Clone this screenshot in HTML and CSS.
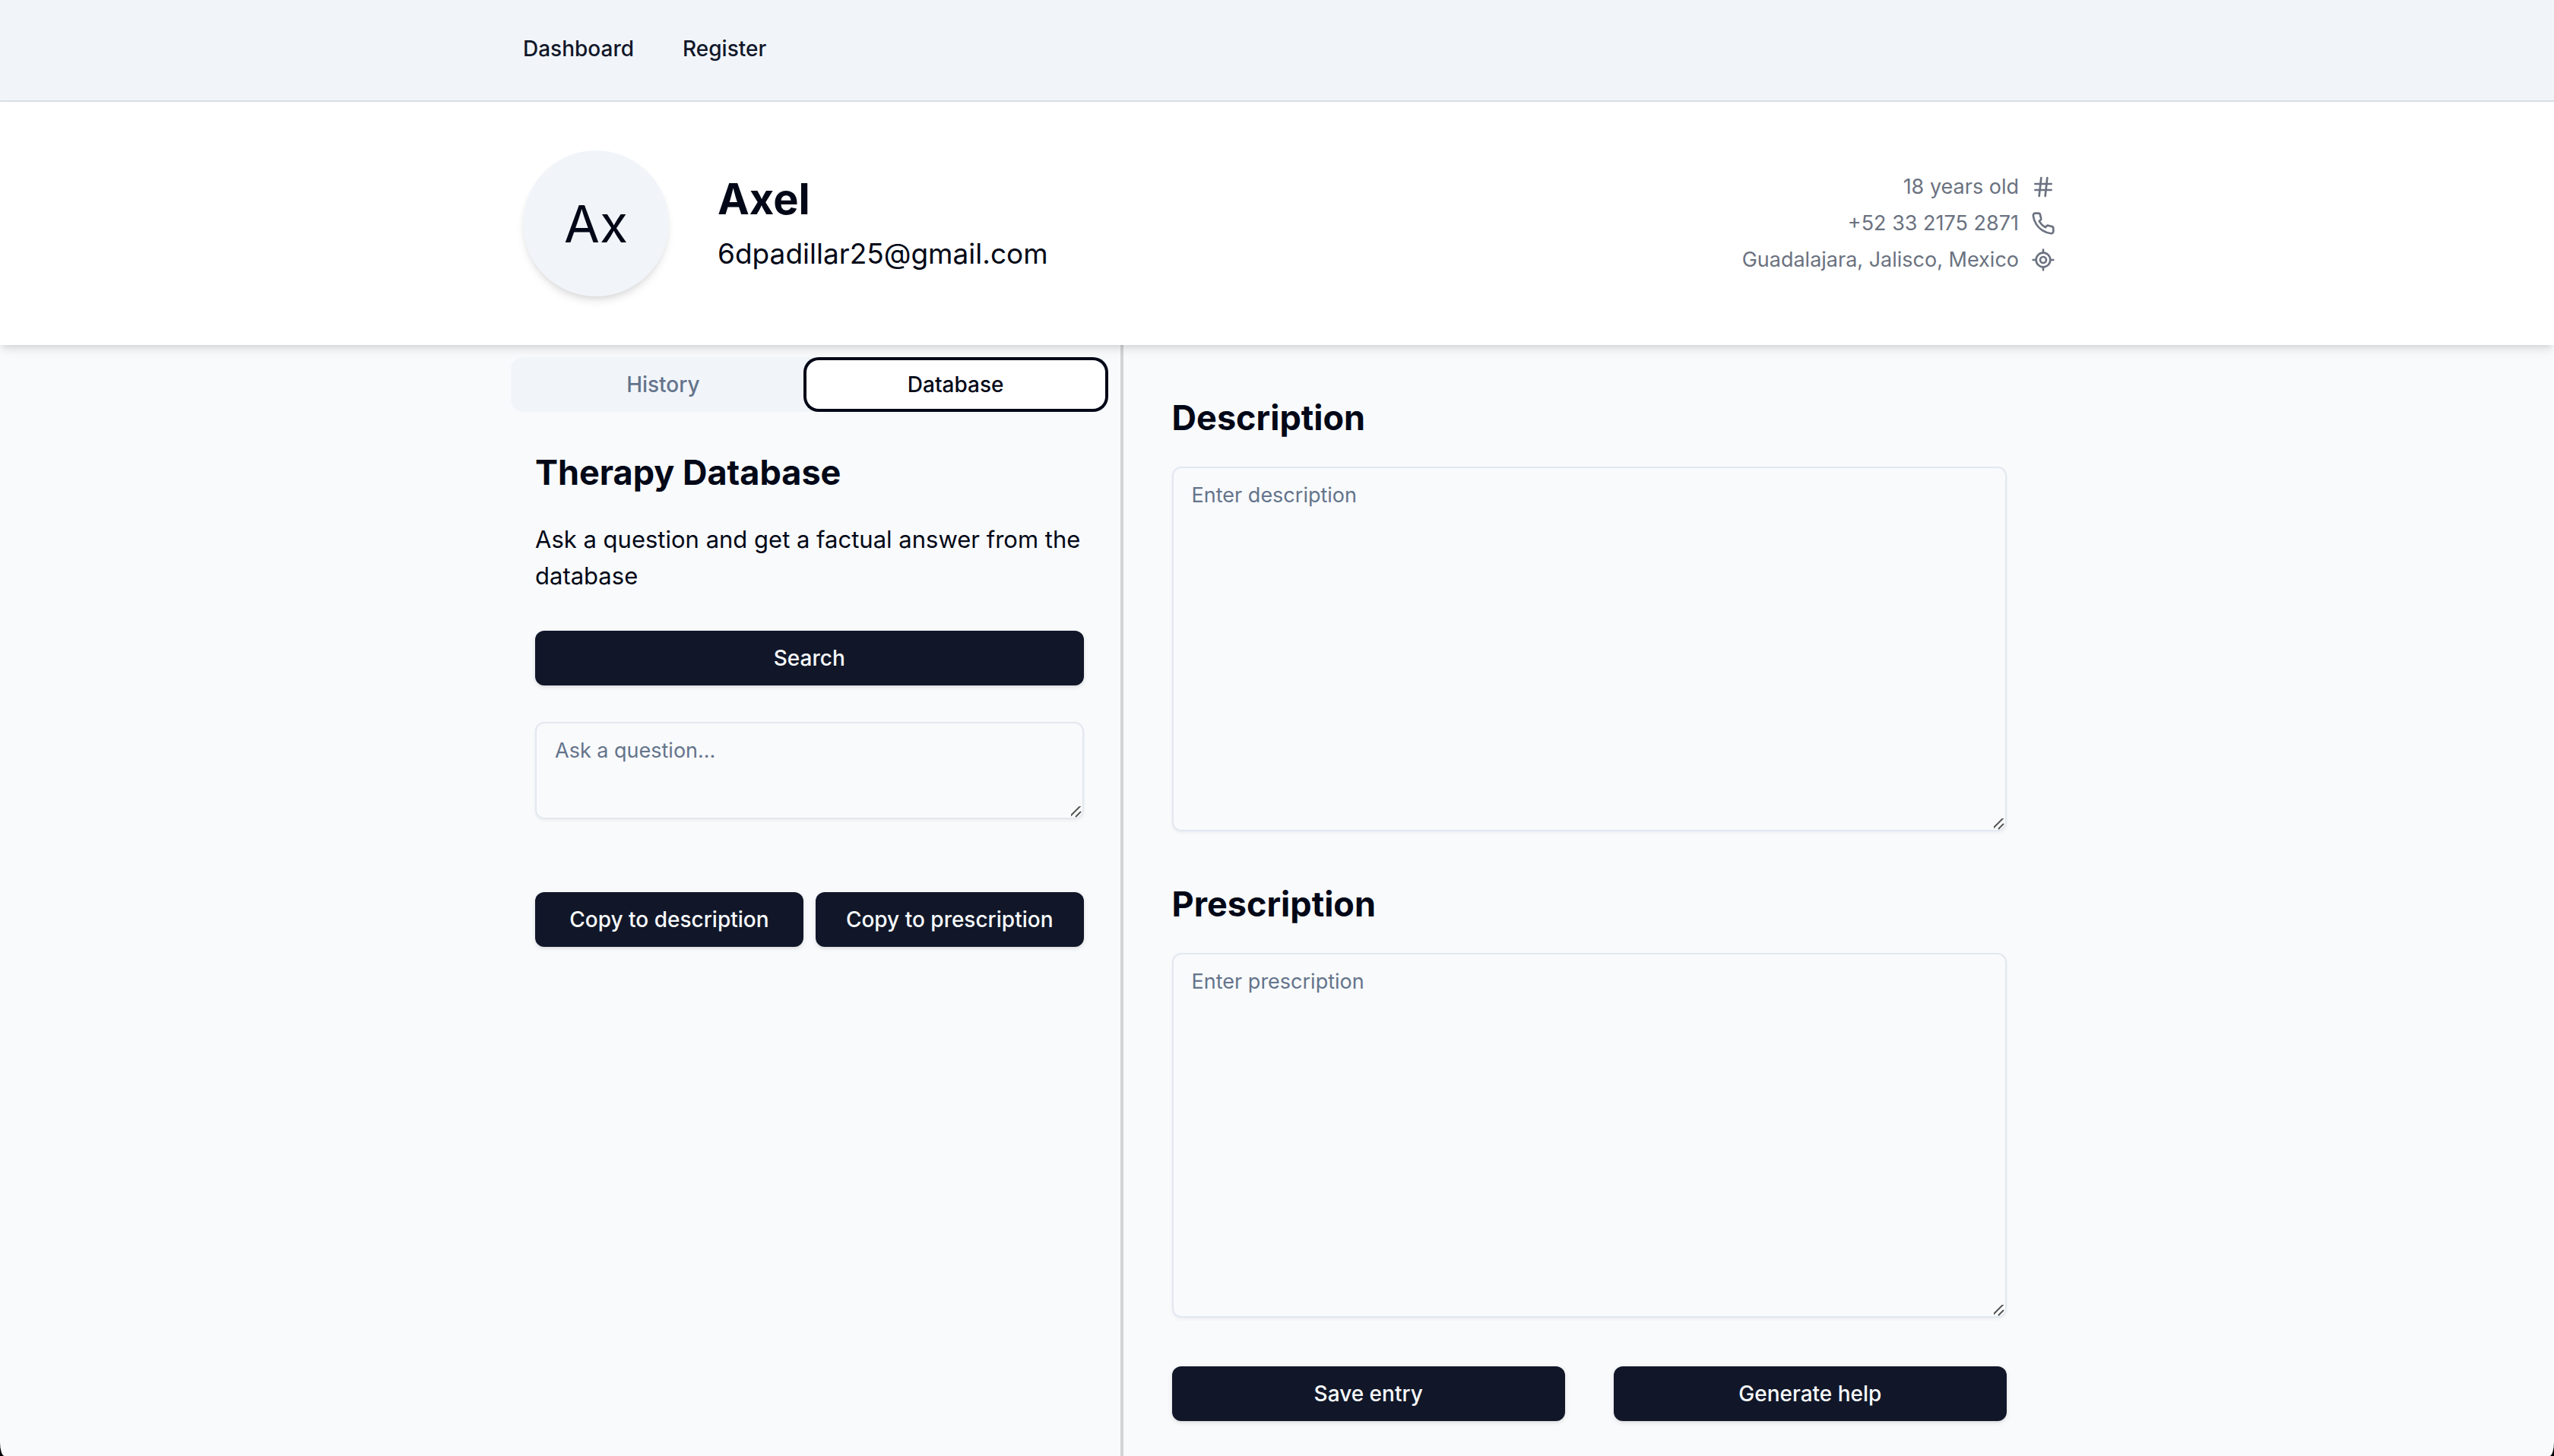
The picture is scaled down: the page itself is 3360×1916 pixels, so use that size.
FILE: index.html
```html
<!DOCTYPE html>
<html lang="en">
<head>
  <meta charset="utf-8">
  <meta name="viewport" content="width=device-width, initial-scale=1">
  <title>Axel</title>
  <link rel="stylesheet" href="styles.css">
</head>
<body>
  <header class="topbar">
    <nav class="container topbar-nav">
      <a class="topbar-link" href="#dashboard">Dashboard</a>
      <a class="topbar-link" href="#register">Register</a>
    </nav>
  </header>

  <section class="profile">
    <div class="container profile-row">
      <div class="avatar">Ax</div>
      <div class="identity">
        <h1 class="name">Axel</h1>
        <p class="email">6dpadillar25@gmail.com</p>
      </div>
      <ul class="facts">
        <li class="fact">
          <span>18 years old</span>
          <svg class="icon" viewBox="0 0 24 24" aria-hidden="true"><path d="M4 9h16M4 15h16M10 3 8 21M16 3l-2 18"/></svg>
        </li>
        <li class="fact">
          <span>+52 33 2175 2871</span>
          <svg class="icon" viewBox="0 0 24 24" aria-hidden="true"><path d="M22 16.92v3a2 2 0 0 1-2.18 2 19.79 19.79 0 0 1-8.63-3.07 19.5 19.5 0 0 1-6-6 19.79 19.79 0 0 1-3.07-8.67A2 2 0 0 1 4.11 2h3a2 2 0 0 1 2 1.72 12.84 12.84 0 0 0 .7 2.81 2 2 0 0 1-.45 2.11L8.09 9.91a16 16 0 0 0 6 6l1.27-1.27a2 2 0 0 1 2.11-.45 12.84 12.84 0 0 0 2.81.7A2 2 0 0 1 22 16.92z"/></svg>
        </li>
        <li class="fact">
          <span>Guadalajara, Jalisco, Mexico</span>
          <svg class="icon" viewBox="0 0 24 24" aria-hidden="true"><path d="M2 12h3M19 12h3M12 2v3M12 19v3"/><circle cx="12" cy="12" r="7"/><circle cx="12" cy="12" r="3"/></svg>
        </li>
      </ul>
    </div>
  </section>

  <main class="container workspace">
    <section class="sidebar">
      <div class="tabs" role="tablist">
        <button class="tab" type="button" role="tab" aria-selected="false">History</button>
        <button class="tab tab-active" type="button" role="tab" aria-selected="true">Database</button>
      </div>
      <div class="tab-panel" role="tabpanel">
        <div class="intro">
          <h2 class="heading">Therapy Database</h2>
          <p class="lead">Ask a question and get a factual answer from the database</p>
        </div>
        <button class="button" type="button">Search</button>
        <textarea class="field field-short" aria-label="Question" placeholder="Ask a question..."></textarea>
        <div class="copy-actions">
          <button class="button" type="button">Copy to description</button>
          <button class="button" type="button">Copy to prescription</button>
        </div>
      </div>
    </section>

    <div class="divider" role="separator" aria-orientation="vertical"></div>

    <form class="entry">
      <div class="entry-group">
        <label class="heading" for="description">Description</label>
        <textarea class="field field-tall" id="description" placeholder="Enter description"></textarea>
      </div>
      <div class="entry-group">
        <label class="heading" for="prescription">Prescription</label>
        <textarea class="field field-tall" id="prescription" placeholder="Enter prescription"></textarea>
      </div>
      <div class="entry-actions">
        <button class="button" type="button">Save entry</button>
        <button class="button" type="button">Generate help</button>
      </div>
    </form>
  </main>
</body>
</html>
```

FILE: styles.css
```css
:root {
  --ink: #020817;
  --primary: #111729;
  --muted: #64748b;
  --surface: #f1f5fa;
  --page: #f9fafc;
  --line: #e2e8f0;
}

*,
*::before,
*::after {
  box-sizing: border-box;
}

html {
  background: #000;
}

body {
  display: flex;
  flex-direction: column;
  min-height: 100vh;
  margin: 0;
  overflow-x: hidden;
  border-radius: 0 0 6px 6px / 0 0 18px 18px;
  background: var(--page);
  color: var(--ink);
  font-family: Inter, "Liberation Sans", sans-serif;
  font-size: 28px;
  line-height: 40px;
}

h1,
h2,
p,
ul {
  margin: 0;
  padding: 0;
}

button,
textarea {
  font: inherit;
}

.container {
  width: 100%;
  max-width: 2048px;
  margin: 0 auto;
}

.topbar {
  border-bottom: 2px solid #d9dde4;
  background: var(--surface);
}

.topbar-nav {
  display: flex;
  gap: 64px;
  padding: 44px 32px 48px;
}

.topbar-link {
  color: var(--primary);
  font-weight: 500;
  text-decoration: none;
}

.profile {
  position: relative;
  background: #fff;
  box-shadow: 0 8px 12px -2px rgb(0 0 0 / 10%), 0 4px 8px -4px rgb(0 0 0 / 10%);
}

.profile-row {
  display: flex;
  align-items: center;
  gap: 64px;
  padding: 64px 0 64px 32px;
}

.avatar {
  display: flex;
  flex: none;
  align-items: center;
  justify-content: center;
  width: 192px;
  height: 192px;
  border-radius: 50%;
  background: var(--surface);
  box-shadow: 0 8px 12px -2px rgb(0 0 0 / 10%), 0 4px 8px -4px rgb(0 0 0 / 10%);
  font-size: 68px;
  line-height: 80px;
}

.identity {
  display: flex;
  flex: 1;
  flex-direction: column;
  gap: 8px;
}

.name {
  font-size: 56px;
  font-weight: 700;
  line-height: 72px;
}

.email {
  font-size: 37px;
  line-height: 56px;
}

.facts {
  color: #6b7280;
  font-size: 27px;
  line-height: 48px;
  list-style: none;
}

.fact {
  display: flex;
  align-items: center;
  justify-content: flex-end;
  gap: 16px;
}

.icon {
  width: 32px;
  height: 32px;
  fill: none;
  stroke: currentColor;
  stroke-width: 2;
  stroke-linecap: round;
  stroke-linejoin: round;
}

.workspace {
  display: grid;
  flex: 1;
  grid-template-columns: minmax(0, 2fr) 4px minmax(0, 3fr);
}

.divider {
  background: #d4d4d5;
}

.sidebar {
  padding: 16px;
}

.tabs {
  display: grid;
  grid-template-columns: 1fr 1fr;
  padding: 8px;
  border-radius: 16px;
  background: var(--surface);
}

.tab {
  padding: 8px 24px;
  border: 0;
  border-radius: 12px;
  background: transparent;
  color: var(--muted);
  font-weight: 500;
}

.tab-active {
  background: #fff;
  box-shadow: 0 0 0 4px #fff, 0 0 0 8px var(--ink);
  color: var(--ink);
}

.tab-panel {
  display: flex;
  flex-direction: column;
  gap: 48px;
  padding: 48px 32px;
}

.intro {
  display: flex;
  flex-direction: column;
  gap: 32px;
}

.heading {
  font-size: 45px;
  font-weight: 700;
  line-height: 64px;
}

.lead {
  font-size: 31px;
  line-height: 48px;
}

.button {
  padding: 16px 32px;
  border: 0;
  border-radius: 12px;
  background: var(--primary);
  box-shadow: 0 2px 6px rgb(0 0 0 / 10%), 0 2px 4px -2px rgb(0 0 0 / 10%);
  color: #f8fafc;
  font-weight: 500;
  white-space: nowrap;
}

.field {
  display: block;
  width: 100%;
  padding: 16px 24px;
  border: 2px solid var(--line);
  border-radius: 12px;
  background: transparent;
  box-shadow: 0 2px 4px rgb(0 0 0 / 5%);
  color: var(--ink);
  font-size: 27px;
  resize: vertical;
}

.field::placeholder {
  color: var(--muted);
  opacity: 1;
}

.field::-webkit-scrollbar {
  width: 18px;
  height: 18px;
}

.field::-webkit-resizer {
  background: url("data:image/svg+xml,%3Csvg xmlns='http://www.w3.org/2000/svg' width='18' height='18' fill='none' stroke-width='2'%3E%3Cpath stroke='%23fff' d='M3 17 17 3M11 17l6-6'/%3E%3Cpath stroke='%23555' d='M1 17 16 2M9 17l7-7'/%3E%3C/svg%3E") right bottom no-repeat;
}

.field-short {
  height: 128px;
}

.field-tall {
  height: 480px;
}

.copy-actions {
  display: grid;
  grid-template-columns: 1fr 1fr;
  gap: 16px;
  margin-top: 48px;
}

.copy-actions .button {
  padding: 16px 0;
}

.entry {
  display: flex;
  flex-direction: column;
  gap: 64px;
  padding: 64px 64px 32px;
}

.entry-group {
  display: flex;
  flex-direction: column;
  gap: 32px;
}

.entry-actions {
  display: grid;
  grid-template-columns: 1fr 1fr;
  gap: 64px;
}
```
